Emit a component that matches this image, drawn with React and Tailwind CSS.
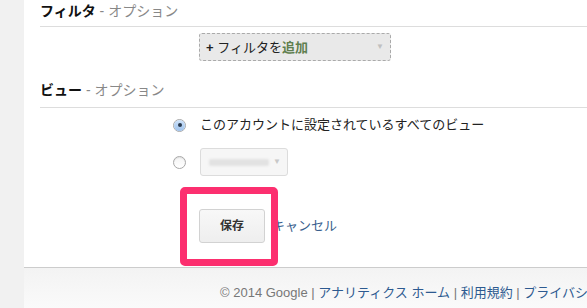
const font = { fontFamily: '"Liberation Sans", "Noto Sans CJK JP", sans-serif' };

const Radio = ({ checked }) => (
  <span className="inline-flex w-[13px] h-[13px] rounded-full border border-[#a8a8a8] bg-gradient-to-b from-[#f4f4f4] to-[#ffffff] items-center justify-center shadow-[inset_0_1px_1px_rgba(0,0,0,0.08)]">
    {checked && (
      <span className="w-[11px] h-[11px] rounded-full bg-gradient-to-b from-[#cfe3fa] to-[#9ec2ec] flex items-center justify-center">
        <span className="w-[4px] h-[4px] rounded-full bg-[#2a3a4f]"></span>
      </span>
    )}
  </span>
);

const App = () => {
  return (
    <div className="flex w-[587px] h-[308px] overflow-hidden bg-white text-[#222]" style={font}>
      <div className="w-[24px] shrink-0 bg-[#f1f1f1]"></div>
      <div className="flex-1 flex flex-col min-w-0">
        <div className="pl-[16px] flex flex-col">
          <div className="h-[22px] leading-[22px] text-[14px] whitespace-nowrap">
            <span className="font-bold text-[#111]">フィルタ</span>
            <span className="text-[#888]"> - オプション</span>
          </div>
          <div className="mt-[4px] border-t border-[#dddddd]"></div>
          <div className="mt-[6px] ml-[159px] w-[192px] h-[28px] border border-dashed border-[#aaaaaa] rounded-[3px] bg-[#e9e9e9] flex items-center justify-between pl-[6px] pr-[6px]">
            <span className="text-[13px] leading-none text-[#222] whitespace-nowrap">
              <span className="font-bold">+</span> フィルタを<span className="font-bold text-[#5f7f4f]">追加</span>
            </span>
            <span className="text-[8px] text-[#c0c0c0]">▼</span>
          </div>
          <div className="mt-[18px] h-[22px] leading-[22px] text-[14px] whitespace-nowrap">
            <span className="font-bold text-[#111]">ビュー</span>
            <span className="text-[#888]"> - オプション</span>
          </div>
          <div className="mt-[6px] border-t border-[#dddddd]"></div>
          <div className="mt-[7px] h-[20px] flex items-center">
            <div className="ml-[133px] w-[27px] flex">
              <Radio checked />
            </div>
            <span className="text-[13px] text-[#222] whitespace-nowrap">このアカウントに設定されているすべてのビュー</span>
          </div>
          <div className="mt-[13px] h-[28px] flex items-center">
            <div className="ml-[133px] w-[27px] flex">
              <Radio />
            </div>
            <div className="w-[88px] h-[28px] border border-[#dcdcdc] rounded-[3px] bg-[#f6f6f6] flex items-center justify-between pl-[8px] pr-[6px]">
              <span className="w-[60px] h-[7px] bg-[#e2e2e2] rounded-[2px] blur-[1px]"></span>
              <span className="text-[8px] text-[#c8c8c8]">▼</span>
            </div>
          </div>
          <div className="mt-[33px] h-[34px] flex items-center relative">
            <div className="ml-[159px] w-[66px] h-[34px] border border-[#d2d2d2] rounded-[3px] bg-gradient-to-b from-[#f8f8f8] to-[#eeeeee] flex items-center justify-center text-[12px] font-bold text-[#333]">
              保存
            </div>
            <span className="ml-[7px] text-[13px] text-[#3a5f8e] whitespace-nowrap">キャンセル</span>
            <div className="absolute left-[140px] top-[-22px] w-[98px] h-[79px] border-[7px] border-[#fc2f6f] rounded-[5px]"></div>
          </div>
        </div>
        <div className="mt-[24px] flex-1 border-t border-[#cccccc] bg-gradient-to-b from-[#f3f3f3] to-[#fafafa] pl-[196px] pt-[17px]">
          <div className="text-[13px] text-[#777] whitespace-nowrap leading-[16px]">
            © 2014 Google | <span className="text-[#2d5a90]">アナリティクス ホーム</span> | <span className="text-[#2d5a90]">利用規約</span> | <span className="text-[#2d5a90]">プライバシー ポリシー</span>
          </div>
        </div>
      </div>
    </div>
  );
};

export default App;
